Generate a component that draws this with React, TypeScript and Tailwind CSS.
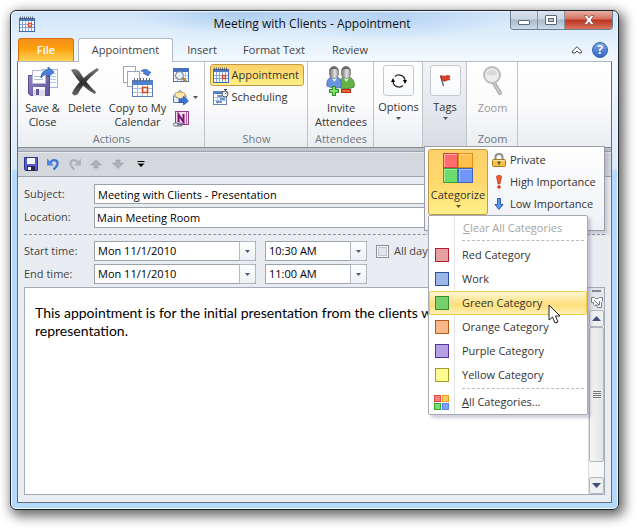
import React, { useState } from "react";

const UI = "font-['Open_Sans','Noto_Sans',sans-serif]";

function Caret({ className = "" }: { className?: string }) {
  return (
    <svg className={className} width="5" height="3" viewBox="0 0 5 3" aria-hidden="true">
      <path d="M0 0h5L2.5 3z" fill="currentColor" />
    </svg>
  );
}

function CalendarIcon({ y = 4 }: { y?: number }) {
  return (
    <svg width="16" height="16" viewBox="0 0 16 16" aria-hidden="true" className="shrink-0">
      <rect x="0.5" y="2.5" width="15" height="13" fill="#fff" stroke="#3f6cb4" />
      <rect x="1" y="3" width="14" height="2" fill="#4d7fd0" />
      <path d="M1.5 0.5v3M3.5 0.5v3M5.5 0.5v3M7.5 0.5v3M9.5 0.5v3M11.5 0.5v3M13.5 0.5v3" stroke="#44536b" strokeWidth="0.8" />
      <path d="M1 8.5h14M1 11.5h14M3.5 5v10M6.5 5v10M9.5 5v10M12.5 5v10" stroke="#84a5dc" />
      <rect x="9.5" y={y + 4.5} width="3" height="3" fill="#fff" stroke="#e2481f" strokeWidth="1.4" />
    </svg>
  );
}

function SaveCloseIcon() {
  return (
    <svg width="32" height="32" viewBox="0 0 32 32" aria-hidden="true">
      <defs>
        <linearGradient id="floppy" x1="0" y1="0" x2="1" y2="1">
          <stop offset="0" stopColor="#9186c4" />
          <stop offset="1" stopColor="#5f5199" />
        </linearGradient>
      </defs>
      <rect x="15.5" y="3.5" width="15" height="18" fill="#f7faff" stroke="#9fb6da" />
      <path d="M23 7.500h6M23 10.500h6M23 13.500h6M23 16.500h6" stroke="#b9cbe8" />
      <path d="M1.500 9.500h21v20h-19l-2-2z" fill="url(#floppy)" stroke="#584b93" />
      <path d="M5.500 4.500h10l3 3v10h-13z" fill="#fdfdff" stroke="#b3b6d0" />
      <path d="M7 10.500h9M7 13.500h9" stroke="#b4b9d0" />
      <rect x="6" y="21" width="12" height="9" fill="#dcdce8" />
      <rect x="6" y="21" width="12" height="3" fill="#f4f4fb" />
      <rect x="9" y="23" width="3" height="6" fill="#62579b" />
      <path d="M14 12c0-5 3-8 7-8V1l6 5-6 5V8c-3 0-5 1-7 4z" fill="#4b82dc" stroke="#2758b0" strokeWidth="0.8" />
    </svg>
  );
}

function DeleteIcon() {
  return (
    <svg width="32" height="32" viewBox="0 0 32 32" aria-hidden="true">
      <defs>
        <linearGradient id="delete-ink" x1="0" y1="0" x2="0" y2="1">
          <stop offset="0" stopColor="#7a7a7a" />
          <stop offset="0.55" stopColor="#2c2c2c" />
          <stop offset="1" stopColor="#6a6a6a" />
        </linearGradient>
      </defs>
      <path d="M2 4c3-2 6-1 8 1 5 8 10 15 17 21l-1 2C17 24 8 14 2 4z" fill="url(#delete-ink)" />
      <path d="M30 4C22 10 14 18 9 28c-2 2-5 2-6-1C8 17 18 8 28 2z" fill="url(#delete-ink)" />
    </svg>
  );
}

function CopyCalendarIcon() {
  return (
    <svg width="32" height="32" viewBox="0 0 32 32" aria-hidden="true">
      <rect x="1.500" y="0.500" width="12" height="16" fill="#fff" stroke="#9aa6bd" />
      <rect x="5.500" y="5.500" width="12" height="15" fill="#fff" stroke="#9aa6bd" />
      <rect x="10.500" y="14.500" width="20" height="16" fill="#fff" stroke="#5d7db5" />
      <rect x="11" y="15" width="19" height="4" fill="#4b82d8" />
      <path d="M12.500 12v4M15.500 12v4M18.500 12v4M21.500 12v4M24.500 12v4M27.500 12v4" stroke="#58667f" />
      <path d="M11 22.500h19M11 26.500h19M15.500 19v11M20.500 19v11M25.500 19v11" stroke="#a9c0e6" />
      <rect x="20.500" y="21.500" width="5" height="5" fill="#fff" stroke="#e2481f" strokeWidth="1.600" />
      <path d="M19 5c4-3 8-1 8 1h2l-3 4-5-3h2c0-1-2-2-4-2z" fill="#4b82dc" stroke="#2758b0" strokeWidth="0.700" />
    </svg>
  );
}

function LookupIcon() {
  return (
    <svg width="16" height="16" viewBox="0 0 16 16" aria-hidden="true">
      <rect x="0.500" y="1.500" width="15" height="13" fill="#fff" stroke="#4a76b8" />
      <rect x="1" y="2" width="14" height="3" fill="#3f6fc4" />
      <path d="M1 8.500h14M1 11.500h14M4.500 5v9M8.500 5v9M12.500 5v9" stroke="#a9c0e6" />
      <path d="M9 10.500l4 4" stroke="#b98328" strokeWidth="2.500" />
      <circle cx="6.500" cy="8.500" r="4" fill="#e4eefa" stroke="#6b7787" />
    </svg>
  );
}

function ForwardIcon() {
  return (
    <svg width="16" height="16" viewBox="0 0 16 16" aria-hidden="true">
      <path d="M0.500 6.500L7 1.500l6 5v7H0.500z" fill="#e8f0fb" stroke="#5b7fb8" />
      <path d="M2.500 7V3.500h9V7L7 10z" fill="#ffe9ae" stroke="#d8a946" strokeWidth="0.700" />
      <path d="M0.500 7L7 10.500 13 7" fill="none" stroke="#7a96c5" />
      <path d="M6 10h4.500V7.500l5 4.500-5 4v-2.500H6z" fill="#3a76d8" stroke="#1e4ea3" strokeWidth="0.700" />
    </svg>
  );
}

function OneNoteIcon() {
  return (
    <svg width="16" height="16" viewBox="0 0 16 16" aria-hidden="true">
      <rect x="2.500" y="0.500" width="13" height="13" fill="#f3dcee" stroke="#9b3a8f" />
      <path d="M13.500 1v12" stroke="#b768ad" />
      <path d="M5.500 11V3.500L10.500 11V3" fill="none" stroke="#7c1470" strokeWidth="2" />
      <rect x="0.500" y="12" width="5" height="3" rx="1.500" fill="#fff" stroke="#55697e" />
      <rect x="4.500" y="12" width="5" height="3" rx="1.500" fill="none" stroke="#55697e" />
    </svg>
  );
}

function SchedulingIcon() {
  return (
    <svg width="16" height="16" viewBox="0 0 16 16" aria-hidden="true" className="shrink-0">
      <rect x="0.500" y="2.500" width="13" height="13" fill="#fff" stroke="#6c86b4" />
      <rect x="1" y="3" width="12" height="2" fill="#4d7fd0" />
      <path d="M1 8.500h12M1 11.500h12M4.500 5v10" stroke="#a9c0e6" />
      <path d="M5 7h4M7 10h5M3 13h6" stroke="#3f6fc4" strokeWidth="1.500" />
      <path d="M12.500 0v2M11 0.500h3" stroke="#444" />
      <circle cx="12" cy="5" r="3" fill="#f4f4f4" stroke="#555" />
      <path d="M12 5l1.500-1.500" stroke="#333" />
    </svg>
  );
}

function AttendeesIcon() {
  return (
    <svg width="32" height="32" viewBox="0 0 32 32" aria-hidden="true">
      <defs>
        <linearGradient id="head" x1="0" x2="1">
          <stop offset="0" stopColor="#707070" />
          <stop offset="0.600" stopColor="#e4e4e4" />
          <stop offset="1" stopColor="#8a8a8a" />
        </linearGradient>
      </defs>
      <path d="M15 22c-1-7 1-11 4-11h5c4 1 6 6 5 10-4 2-10 2-14 1z" fill="#64b344" stroke="#3a7d27" strokeWidth="0.800" />
      <path d="M18 11l3.500 5 3-5z" fill="#eef7e9" />
      <rect x="16.500" y="0.500" width="9" height="12" rx="4.500" fill="url(#head)" stroke="#777" strokeWidth="0.700" />
      <path d="M16.500 5c0-6 9-6 9 0-1-2-2-2-4-2s-4 0-5 2z" fill="#666" />
      <path d="M2 20c-1-5 2-9 5-9h5c4 1 5 6 4 10-4 2-10 1-14-1z" fill="#6a93dd" stroke="#3f66b0" strokeWidth="0.800" />
      <path d="M6 11l3.500 5 3-5z" fill="#edf3fd" />
      <rect x="4.500" y="0.500" width="9" height="12" rx="4.500" fill="url(#head)" stroke="#777" strokeWidth="0.700" />
      <path d="M4.500 5c0-6 9-6 9 0-1-2-2-2-4-2s-4 0-5 2z" fill="#666" />
      <path d="M7.500 20.500h3v3h3v3h-3v3h-3v-3h-3v-3h3z" fill="#8be06b" stroke="#238a17" />
      <rect x="16.500" y="23.500" width="9" height="3" fill="#f4633f" stroke="#b72a12" />
    </svg>
  );
}

function ZoomIcon() {
  return (
    <svg width="32" height="32" viewBox="0 0 32 32" aria-hidden="true">
      <path d="M17 17l6 10" stroke="#a0a0a0" strokeWidth="4" strokeLinecap="round" />
      <path d="M17 17l6 10" stroke="#ccc" strokeWidth="2" strokeLinecap="round" />
      <circle cx="15" cy="9" r="8" fill="#ececec" stroke="#bcbcbc" strokeWidth="2" />
      <path d="M9 9c1-5 8-7 11-2-3 4-6 1-11 2z" fill="#d8d8d8" />
    </svg>
  );
}

function CycleIcon() {
  return (
    <svg width="16" height="16" viewBox="0 0 16 16" aria-hidden="true" fill="none" stroke="#222" strokeWidth="1.200">
      <path d="M4 3.500C7 0.500 14 2 14 8M12 12.500C9 15.500 2 14 2 8" />
      <path d="M12 7h4L14 11zM0 9h4L2 5z" fill="#000" stroke="none" />
    </svg>
  );
}

function FlagIcon() {
  return (
    <svg width="16" height="16" viewBox="0 0 16 16" aria-hidden="true">
      <path d="M3.500 3l3 10" stroke="#4a5876" strokeWidth="1.200" />
      <path d="M3 3c3-1 3 1 6 0 2-1 3 0 4 0l-1 2 1 2c-3-1-4 2-7 1z" fill="#de3d22" stroke="#9c1f12" strokeWidth="0.600" />
    </svg>
  );
}

function Tiles() {
  return (
    <svg width="30" height="30" viewBox="0 0 30 30" aria-hidden="true">
      <rect x="0.500" y="0.500" width="14" height="14" fill="#ff6c6c" stroke="#d54444" />
      <rect x="15.500" y="0.500" width="14" height="14" fill="#ffc050" stroke="#e08e10" />
      <rect x="0.500" y="15.500" width="14" height="14" fill="#6bdc6b" stroke="#36a336" />
      <rect x="15.500" y="15.500" width="14" height="14" fill="#6f97fb" stroke="#4063c7" />
      <path d="M1.500 14V1.500H14M16.500 14V1.500H29M1.500 29V16.500H14M16.500 29V16.500H29" fill="none" stroke="#fff" strokeOpacity="0.400" />
    </svg>
  );
}

function SmallTiles() {
  return (
    <svg width="15" height="15" viewBox="0 0 15 15" aria-hidden="true">
      <rect x="0.500" y="0.500" width="6" height="6" fill="#f98080" stroke="#e04848" />
      <rect x="8.500" y="0.500" width="6" height="6" fill="#ffc96a" stroke="#ee9a14" />
      <rect x="0.500" y="8.500" width="6" height="6" fill="#76e076" stroke="#35a835" />
      <rect x="8.500" y="8.500" width="6" height="6" fill="#7ea2fb" stroke="#5c83e8" />
    </svg>
  );
}

function LockIcon() {
  return (
    <svg width="14" height="14" viewBox="0 0 14 14" aria-hidden="true">
      <path d="M3.500 7V4c0-4 7-4 7 0v3" fill="none" stroke="#8c8c8c" strokeWidth="2" />
      <rect x="0.500" y="6.500" width="13" height="7" rx="1" fill="#f3c34d" stroke="#a87a1c" />
      <path d="M1.500 7.500h11" stroke="#fce6a2" />
      <path d="M7 8v4M5.500 9.500h3" stroke="#5c4313" strokeWidth="1.200" />
    </svg>
  );
}

function HighIcon() {
  return (
    <svg width="14" height="14" viewBox="0 0 14 14" aria-hidden="true">
      <path d="M4.500 2c0-2.500 5-2.500 5 0L8 9H6z" fill="#ee5a36" stroke="#b3260f" strokeWidth="0.600" />
      <circle cx="7" cy="12" r="1.800" fill="#d93517" />
    </svg>
  );
}

function LowIcon() {
  return (
    <svg width="14" height="14" viewBox="0 0 14 14" aria-hidden="true">
      <path d="M5.500 1.500h3v6H11L7 12.500 3 7.500h2.500z" fill="#5f93f2" stroke="#2a58b5" />
    </svg>
  );
}

function BigButton({ icon, lines, className = "", disabled }: { icon: React.ReactNode; lines: string[]; className?: string; disabled?: boolean }) {
  return (
    <button type="button" disabled={disabled} className={"flex flex-col items-center gap-[3px] pt-1 whitespace-nowrap leading-[14px] " + className}>
      {icon}
      <span>
        {lines.map((l) => (
          <span key={l} className="block">{l}</span>
        ))}
      </span>
    </button>
  );
}

function Group({ label, className = "", children }: { label?: string; className?: string; children: React.ReactNode }) {
  return (
    <section className={"relative flex h-[85px] shrink-0 flex-col border-r border-[#c0c4ca] pl-px " + className}>
      <div className="flex flex-1 justify-center">{children}</div>
      {label && <h2 className="h-4 text-center leading-4 text-[#6c7684]">{label}</h2>}
    </section>
  );
}

function CollapsedGroup({ icon, label }: { icon: React.ReactNode; label: string }) {
  return (
    <button type="button" className="flex flex-col items-center pt-[3px] leading-[13px]">
      <span className="flex size-[31px] items-center justify-center rounded-[3px] border border-[#c6cad0] bg-gradient-to-b from-white to-[#f8f9fb]">{icon}</span>
      <span className="mt-1">{label}</span>
      <Caret className="mt-1 text-[#555]" />
    </button>
  );
}

function Combo({ id, label, value, options, className }: { id: string; label: string; value: string; options: string[]; className: string }) {
  return (
    <div className={"relative h-5 " + className}>
      <select id={id} aria-label={label} defaultValue={value} className="h-full w-full appearance-none border border-[#9da3ab] bg-white pl-[3px] text-black outline-none">
        {options.map((o) => (
          <option key={o}>{o}</option>
        ))}
      </select>
      <span className="pointer-events-none absolute inset-y-0 right-0 flex w-[17px] items-center justify-center rounded-r-[2px] border border-[#b3b9c2] bg-gradient-to-b from-white to-[#edf0f4] text-[#4a587c]">
        <Caret />
      </span>
    </div>
  );
}

const categories = [
  { name: "Red Category", swatch: "border-[#b02030] bg-[#e8a0a3]" },
  { name: "Work", swatch: "border-[#2a5294] bg-[#9db6e8]" },
  { name: "Green Category", swatch: "border-[#3a8a34] bg-[#78d06d]" },
  { name: "Orange Category", swatch: "border-[#b9581c] bg-[#f8b98a]" },
  { name: "Purple Category", swatch: "border-[#50359a] bg-[#b4a0e2]" },
  { name: "Yellow Category", swatch: "border-[#a39a28] bg-[#fefb90]" },
];

function CategoryMenu() {
  const row = "relative flex h-6 w-full items-center text-left";
  return (
    <div role="menu" className="absolute top-full left-0 z-20 w-[160px] rounded-[2px] border border-[#a5a9b1] bg-[linear-gradient(to_right,#fff_25px,#e1e3e6_25px,#e1e3e6_26px,#fff_26px)] shadow-[3px_3px_3px_rgba(80,70,110,0.25)]">
      <button type="button" role="menuitem" disabled className={row + " pl-[34px] text-[#a5a5a5]"}>
        <span><u>C</u>lear All Categories</span>
      </button>
      <hr className="mr-[3px] mb-[2px] ml-[33px] border-t border-dashed border-[#bcbcbc]" />
      {categories.map((c) => {
        const on = c.name === "Green Category";
        return (
          <button
            key={c.name}
            type="button"
            role="menuitem"
            className={row + (on ? " rounded-[2px] bg-[linear-gradient(to_bottom,#fff8dc,#fde48d_45%,#fddf7c_60%,#fff2bd)] shadow-[inset_0_0_0_1px_#f0cc48]" : "")}
          >
            <span className={"ml-[6px] size-[14px] border " + c.swatch} />
            <span className="ml-[13px]">{c.name}</span>
            {on && (
              <svg className="absolute top-[13px] left-[119px]" width="13" height="20" viewBox="0 0 13 20" aria-hidden="true">
                <path d="M1 1v15l3.500-3 2.500 6 3-1-2.500-6H12z" fill="#fff" stroke="#222" />
              </svg>
            )}
          </button>
        );
      })}
      <hr className="mt-[1px] mr-[3px] mb-[1px] ml-[33px] border-t border-dashed border-[#bcbcbc]" />
      <button type="button" role="menuitem" className={row}>
        <span className="ml-[5px]"><SmallTiles /></span>
        <span className="ml-[13px]"><u>A</u>ll Categories...</span>
      </button>
    </div>
  );
}

function TagsPopup() {
  const item = "flex h-[22px] items-center gap-1 whitespace-nowrap";
  return (
    <div className="absolute top-full left-px z-10 -mt-px flex h-[85px] w-[181px] items-start border border-[#989da5] bg-gradient-to-b from-white to-[#eef0f4] pl-[3px] pt-[2px] shadow-[3px_3px_3px_rgba(80,70,110,0.2)]">
      <div className="relative">
        <button type="button" aria-expanded="true" className="flex h-[66px] w-[60px] flex-col items-center rounded-[3px] border border-[#c29a45] bg-gradient-to-b from-[#fbd26a] via-[#ffd86e] to-[#fff08a] pt-[3px] leading-[13px]">
          <Tiles />
          <span className="mt-[5px]">Categorize</span>
          <Caret className="mt-1 text-[#6b5523]" />
        </button>
        <CategoryMenu />
      </div>
      <div className="ml-1">
        <button type="button" className={item}><LockIcon />Private</button>
        <button type="button" className={item}><HighIcon />High Importance</button>
        <button type="button" className={item}><LowIcon />Low Importance</button>
      </div>
    </div>
  );
}

function Ribbon() {
  return (
    <div className="flex border-b border-[#858b93] bg-gradient-to-b from-white via-[#fbfbfc] to-[#eaedf1] text-[#333]">
      <Group label="Actions" className="w-[187px]">
        <BigButton className="w-10" icon={<SaveCloseIcon />} lines={["Save &", "Close"]} />
        <BigButton className="ml-[3px] w-[38px]" icon={<DeleteIcon />} lines={["Delete"]} />
        <BigButton className="ml-[3px] w-[62px]" icon={<CopyCalendarIcon />} lines={["Copy to My", "Calendar"]} />
        <div className="ml-1 flex w-7 flex-col pt-[2px]">
          <button type="button" aria-label="Calendar" className="flex h-[22px] items-center"><LookupIcon /></button>
          <button type="button" aria-label="Forward" className="flex h-[22px] items-center gap-1"><ForwardIcon /><Caret className="text-[#555]" /></button>
          <button type="button" aria-label="OneNote" className="flex h-[22px] items-center"><OneNoteIcon /></button>
        </div>
      </Group>
      <Group label="Show" className="w-[103px]">
        <div className="pt-[2px]">
          <button type="button" aria-pressed="true" className="flex h-[22px] w-[94px] items-center gap-[3px] rounded-[3px] border border-[#c29a45] bg-gradient-to-b from-[#fbd26a] via-[#ffdf74] to-[#fff08a] pl-[2px]"><CalendarIcon />Appointment</button>
          <button type="button" className="flex h-[22px] items-center gap-[3px] pl-[3px]"><SchedulingIcon />Scheduling</button>
        </div>
      </Group>
      <Group label="Attendees" className="w-[66px]">
        <BigButton icon={<AttendeesIcon />} lines={["Invite", "Attendees"]} />
      </Group>
      <Group className="w-[49px]">
        <CollapsedGroup icon={<CycleIcon />} label="Options" />
      </Group>
      <Group className="w-[44px] bg-gradient-to-b from-[#f2f4f6] to-[#d9dde3]">
        <CollapsedGroup icon={<FlagIcon />} label="Tags" />
        <TagsPopup />
      </Group>
      <Group label="Zoom" className="w-[51px]">
        <BigButton disabled className="text-[#9a9a9a]" icon={<ZoomIcon />} lines={["Zoom"]} />
      </Group>
    </div>
  );
}

function QuickAccess() {
  return (
    <div className="mt-[3px] flex h-[26px] items-center gap-[6px] border-t border-b border-[#9aa3ae] bg-[#d4d8dd] pl-[6px] shadow-[inset_0_1px_0_#e7eaed]">
      <button type="button" aria-label="Save">
        <svg width="14" height="14" viewBox="0 0 14 14" aria-hidden="true">
          <path d="M0.500 0.500h13v13h-12l-1-1z" fill="#5a5cc8" stroke="#30318e" />
          <rect x="3" y="1" width="8" height="6" fill="#f4f8ff" />
          <rect x="3" y="9" width="8" height="5" fill="#26284f" />
          <rect x="4" y="10" width="3" height="3" fill="#fff" />
        </svg>
      </button>
      <button type="button" aria-label="Undo" className="ml-[2px]">
        <svg width="14" height="14" viewBox="0 0 14 14" aria-hidden="true">
          <path d="M4 5.500C7 1.500 12 3 11.500 7c-0.500 3-2 4-4 5.500" fill="none" stroke="#3f77d4" strokeWidth="2.400" />
          <path d="M1 1.500v7h7z" fill="#4f86e0" />
        </svg>
      </button>
      <button type="button" aria-label="Redo" disabled className="ml-[2px]">
        <svg width="14" height="14" viewBox="0 0 14 14" aria-hidden="true">
          <path d="M10 5.500C7 1.500 2 3 2.500 7c0.500 3 2 4 4 5.500" fill="none" stroke="#adb0b4" strokeWidth="2.200" />
          <path d="M13 1.500v7H6z" fill="#b1b4b8" />
        </svg>
      </button>
      <button type="button" aria-label="Previous item" disabled className="ml-[2px]">
        <svg width="12" height="10" viewBox="0 0 12 10" aria-hidden="true"><path d="M6 0.500L11.500 6H8v3H4V6H0.500z" fill="#b0b2b6" stroke="#9b9ea3" strokeWidth="0.600" /></svg>
      </button>
      <button type="button" aria-label="Next item" disabled className="ml-1">
        <svg width="12" height="10" viewBox="0 0 12 10" aria-hidden="true"><path d="M6 9.500L11.500 4H8V1H4v3H0.500z" fill="#b0b2b6" stroke="#9b9ea3" strokeWidth="0.600" /></svg>
      </button>
      <button type="button" aria-label="Customize toolbar" className="ml-[7px]">
        <svg width="8" height="6" viewBox="0 0 8 6" aria-hidden="true"><path d="M0.500 0.500h7" stroke="#000" /><path d="M0.500 2.500h7L4 6z" /></svg>
      </button>
    </div>
  );
}

const label = "w-[70px] shrink-0 text-[#444]";

function Form() {
  const [allDay, setAllDay] = useState(false);
  return (
    <form className="flex flex-1 flex-col bg-[#e9ecf1] px-[6px] pt-[7px] pb-[7px]">
      <div className="flex items-center">
        <label htmlFor="subject" className={label}>Subject:</label>
        <input id="subject" defaultValue="Meeting with Clients - Presentation" className="h-5 min-w-0 flex-1 border border-[#9da3ab] bg-white pl-[3px] text-black outline-none" />
      </div>
      <div className="mt-[3px] flex items-center">
        <label htmlFor="location" className={label}>Location:</label>
        <input id="location" defaultValue="Main Meeting Room" className="h-[21px] min-w-0 flex-1 border border-[#9da3ab] bg-white pl-[2px] text-black outline-none" />
      </div>
      <hr className="mt-[6px] border-t border-dashed border-[#8d929a]" />
      <div className="mt-[6px] flex items-center">
        <label htmlFor="start-date" className={label}>Start time:</label>
        <Combo id="start-date" label="Start date" value="Mon 11/1/2010" options={["Mon 11/1/2010", "Tue 11/2/2010"]} className="w-[162px]" />
        <Combo id="start-time" label="Start hour" value="10:30 AM" options={["10:00 AM", "10:30 AM", "11:00 AM"]} className="ml-[9px] w-[102px]" />
        <label className="ml-[9px] flex items-center gap-[5px] text-[#444]">
          <input type="checkbox" checked={allDay} onChange={(e) => setAllDay(e.target.checked)} className="size-[13px] appearance-none border border-[#8d929a] bg-[#e3e5e7] shadow-[inset_0_0_0_1px_#f5f5f5,inset_0_0_0_2px_#c4c8cc] checked:bg-[#4a587c]" />
          All day event
        </label>
      </div>
      <div className="mt-[3px] flex items-center">
        <label htmlFor="end-date" className={label}>End time:</label>
        <Combo id="end-date" label="End date" value="Mon 11/1/2010" options={["Mon 11/1/2010", "Tue 11/2/2010"]} className="w-[162px]" />
        <Combo id="end-time" label="End hour" value="11:00 AM" options={["10:30 AM", "11:00 AM", "11:30 AM"]} className="ml-[9px] w-[102px]" />
      </div>
      <div className="mt-[3px] flex min-h-[180px] flex-1 border border-[#a3abb6] bg-white">
        <textarea
          aria-label="Notes"
          className="min-w-0 flex-1 resize-none bg-white pt-4 pr-9 pl-[10px] font-[Lato,'Open_Sans',sans-serif] text-[14px] leading-[18px] text-black outline-none"
          defaultValue="This appointment is for the initial presentation from the clients who seek legal representation."
        />
        <div className="flex w-4 flex-col border-l border-[#d8dbe0] bg-[#f7f7f8]">
          <div className="flex h-[22px] flex-col items-center gap-1 bg-[#e4e7eb] pt-[2px]">
            <span className="h-[2px] w-[9px] bg-[#858a92]" />
            <svg width="12" height="12" viewBox="0 0 12 12" fill="#fff" stroke="#777c84" aria-hidden="true">
              <path d="M0.500 1.500h3l1 1h3l1-1h3v4l-1 1v5h-4l-1-2h-2l-1-1v-2h-2z" />
              <path d="M3 4l5 5M8.500 5v4h-4" fill="none" />
            </svg>
          </div>
          <button type="button" aria-label="Scroll up" className="flex h-[17px] items-center justify-center rounded-[2px] border border-[#b3b8bf] bg-[#eef0f2]">
            <svg width="9" height="5" viewBox="0 0 9 5" aria-hidden="true"><path d="M0 5h9L4.500 0z" fill="#424f78" /></svg>
          </button>
          <div className="flex min-h-10 flex-1 flex-col pb-[15px]">
            <div className="flex flex-1 flex-col items-center justify-center gap-px rounded-[2px] border border-[#b3b8bf] bg-gradient-to-r from-[#f5f5f6] to-[#e2e4e7]">
              <span className="h-px w-2 bg-[#777]" />
              <span className="h-px w-2 bg-[#777]" />
              <span className="h-px w-2 bg-[#777]" />
              <span className="h-px w-2 bg-[#777]" />
            </div>
          </div>
          <button type="button" aria-label="Scroll down" className="flex h-[17px] items-center justify-center rounded-[2px] border border-[#b3b8bf] bg-[#eef0f2]">
            <svg width="9" height="5" viewBox="0 0 9 5" aria-hidden="true"><path d="M0 0h9L4.500 5z" fill="#424f78" /></svg>
          </button>
        </div>
      </div>
    </form>
  );
}

function TitleBar() {
  return (
    <header className="grid h-[27px] grid-cols-[1fr_auto_1fr] items-start">
      <span className="pt-[5px] pl-2"><CalendarIcon y={3} /></span>
      <h1 className="pt-[4px] pr-[5px] text-[12px] leading-[17px] text-[#111]">Meeting with Clients - Appointment</h1>
      <div className="mr-[5px] flex h-[19px] justify-self-end overflow-hidden rounded-b-[4px] border border-t-0 border-[#6e7d90]">
        <button type="button" aria-label="Minimize" className="flex w-[27px] items-center justify-center border-r border-[#8492a5] bg-[linear-gradient(#dbe5f0,#c8d4e1_45%,#a8b8ca_50%,#cfdbe8)]">
          <span className="mt-1 h-[5px] w-3 rounded-[1px] border border-[#5d6877] bg-white" />
        </button>
        <button type="button" aria-label="Maximize" className="flex w-[27px] items-center justify-center border-r border-[#8492a5] bg-[linear-gradient(#dbe5f0,#c8d4e1_45%,#a8b8ca_50%,#cfdbe8)]">
          <span className="flex h-[10px] w-3 items-center justify-center rounded-[1px] border border-[#5d6877] bg-white"><span className="h-1 w-[6px] border border-[#5d6877] bg-[#b9c6d6]" /></span>
        </button>
        <button type="button" aria-label="Close" className="flex w-[47px] items-center justify-center bg-[linear-gradient(#e8b0a4,#d5705e_45%,#be3420_50%,#d8725a)]">
          <svg width="12" height="10" viewBox="0 0 12 10" aria-hidden="true">
            <path d="M1 0.500h3L6 3l2-2.500h3L7.800 5 11 9.500H8L6 7 4 9.500H1L4.200 5z" fill="#fff" stroke="#6c3a3a" strokeWidth="0.600" />
          </svg>
        </button>
      </div>
    </header>
  );
}

function Tabs() {
  const tab = "h-full text-center text-[#444]";
  return (
    <nav className="relative z-10 -mb-px flex h-6 items-stretch pl-[7px]">
      <button type="button" className="mb-px w-[56px] rounded-t-[3px] border border-b-0 border-[#d9700f] bg-[linear-gradient(#f58f1c,#fba00a_45%,#fdb52b_65%,#fed251)] font-semibold text-white">File</button>
      <button type="button" className="ml-1 w-[95px] rounded-t-[3px] border border-b-0 border-[#b4bbc4] bg-white text-[#444]">Appointment</button>
      <button type="button" className={tab + " w-[58px]"}>Insert</button>
      <button type="button" className={tab + " w-[86px]"}>Format Text</button>
      <button type="button" className={tab + " w-[66px]"}>Review</button>
      <div className="ml-auto flex items-center gap-[10px] pr-[10px]">
        <button type="button" aria-label="Minimize the ribbon">
          <svg width="10" height="8" viewBox="0 0 10 8" aria-hidden="true"><path d="M5 0.700L9.300 5v2H7L5 5 3 7H0.700V5z" fill="#fff" stroke="#444a55" /></svg>
        </button>
        <button type="button" aria-label="Help" className="flex size-4 items-center justify-center rounded-full border border-[#2f5fae] bg-gradient-to-b from-[#7ea6e6] to-[#3468c0] text-[12px] font-bold text-white">?</button>
      </div>
    </nav>
  );
}

export default function App() {
  return (
    <div className={"flex min-h-screen bg-white pt-[10px] pr-[18px] pb-[18px] pl-[10px] text-[11px] " + UI}>
      <main className="flex min-w-0 flex-1 flex-col rounded-[6px] border border-[#1e242c] bg-[radial-gradient(ellipse_110px_24px_at_38%_0px,#a9cbee,transparent),radial-gradient(ellipse_120px_26px_at_62%_4px,#b3d2f1,transparent),linear-gradient(#cfe4fa_0px,#e1effc_26px,#f4f9fe_50px,#d9e9fa_158px,#b5d9fb_160px)] shadow-[inset_0_0_0_1px_#eef6fe,3px_4px_12px_2px_rgba(0,0,0,0.6)]">
        <TitleBar />
        <Tabs />
        <div className="mx-[6px] mb-[6px] flex flex-1 flex-col border border-t-[#b4bbc4] border-[#5f6e82] bg-[#bfc4ca]">
          <Ribbon />
          <QuickAccess />
          <Form />
        </div>
      </main>
    </div>
  );
}
